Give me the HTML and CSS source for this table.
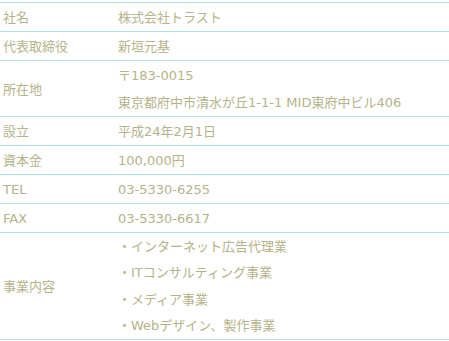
FILE: index.html
```html
<!DOCTYPE html>
<html lang="ja">
<head>
<meta charset="utf-8">
<link rel="stylesheet" href="styles.css">
</head>
<body>
<table class="company">
  <tr><th>社名</th><td>株式会社トラスト</td></tr>
  <tr><th>代表取締役</th><td>新垣元基</td></tr>
  <tr><th>所在地</th><td>〒183-0015<br>東京都府中市清水が丘1-1-1 MID東府中ビル406</td></tr>
  <tr><th>設立</th><td>平成24年2月1日</td></tr>
  <tr><th>資本金</th><td>100,000円</td></tr>
  <tr><th>TEL</th><td>03-5330-6255</td></tr>
  <tr><th>FAX</th><td>03-5330-6617</td></tr>
  <tr><th>事業内容</th><td>
    <ul class="biz">
      <li>・インターネット広告代理業</li>
      <li>・ITコンサルティング事業</li>
      <li>・メディア事業</li>
      <li>・Webデザイン、製作事業</li>
    </ul>
  </td></tr>
</table>
</body>
</html>
```
FILE: styles.css
```css
html, body {
  margin: 0;
  padding: 0;
  background: #fff;
}
body {
  font-family: "DejaVu Sans", "Noto Sans CJK JP", sans-serif;
  font-size: 13px;
  color: #b5b389;
}
.company {
  width: 100%;
  margin-top: 2px;
  border-collapse: separate;
  border-spacing: 0;
  border-top: 1px solid #b3def0;
}
.company th,
.company td {
  padding: 1px 3px 0;
  line-height: 27px;
  font-weight: normal;
  text-align: left;
  vertical-align: middle;
  border-bottom: 1px solid #b3def0;
}
.company th {
  width: 109px;
}
.biz {
  list-style: none;
  margin: 0;
  padding: 0;
}
.biz li {
  line-height: 26.25px;
}
```
